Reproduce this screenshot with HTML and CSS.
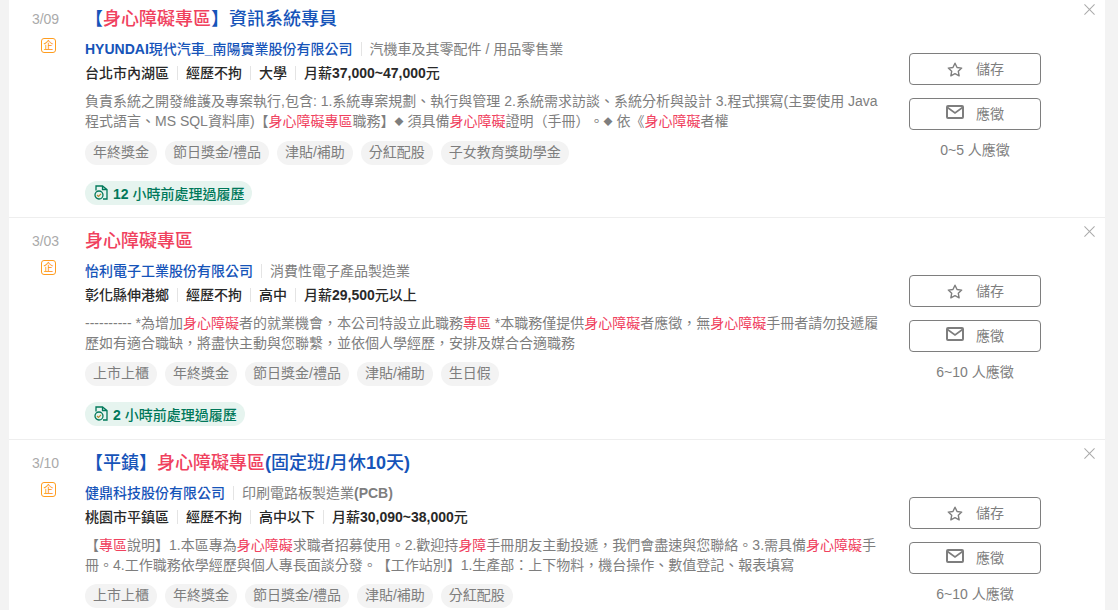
FILE: index.html
```html
<!DOCTYPE html>
<html lang="zh-Hant">
<head>
  <meta charset="UTF-8">
  <meta name="viewport" content="width=device-width, initial-scale=1">
  <title>身心障礙專區</title>
  <link rel="stylesheet" href="styles.css">
</head>
<body>
  <svg class="defs" aria-hidden="true">
    <symbol id="i-close" viewBox="0 0 12 12"><path d="M.5.5l11 11M11.500.5l-11 11" fill="none" stroke="currentColor" stroke-width="1.100"/></symbol>
    <symbol id="i-star" viewBox="0 0 16 15"><path d="M8 1.200l2.050 4.250 4.650.62-3.400 3.220.85 4.600L8 11.650l-4.150 2.240.85-4.600L1.300 6.070l4.650-.62z" fill="none" stroke="currentColor" stroke-width="1.400" stroke-linejoin="round"/></symbol>
    <symbol id="i-mail" viewBox="0 0 18 14"><rect x="1" y="1" width="16" height="12" rx="1" fill="none" stroke="currentColor" stroke-width="2"/><path d="M1.500 2.500L9 8l7.500-5.500" fill="none" stroke="currentColor" stroke-width="1.600"/></symbol>
    <symbol id="i-doc" viewBox="0 0 14 15"><path d="M2 5.500V1h6.500L13 4.500V14H9M8.500 1v3.500H13" fill="none" stroke="currentColor" stroke-width="1.300"/><circle cx="5" cy="10" r="4" fill="none" stroke="currentColor" stroke-width="1.300"/><path d="M3 10l1.500 1.500L7 8.900" fill="none" stroke="#b08a2e" stroke-width="1.200"/></symbol>
  </svg>

  <div class="job-list">

    <article class="job">
      <button class="close"><svg><use href="#i-close"/></svg></button>
      <div class="side">
        <div class="date">3/09</div>
        <span class="corp">企</span>
      </div>
      <div class="main">
        <h2 class="title">【<em>身心障礙專區</em>】資訊系統專員</h2>
        <div class="row company"><a><b>HYUNDAI</b>現代汽車<b>_</b>南陽實業股份有限公司</a><span class="industry">汽機車及其零配件 / 用品零售業</span></div>
        <ul class="row meta">
          <li>台北市內湖區</li><li>經歷不拘</li><li>大學</li><li>月薪<b>37,000~47,000</b>元</li>
        </ul>
        <p class="desc">負責系統之開發維護及專案執行,包含: 1.系統專案規劃、執行與管理 2.系統需求訪談、系統分析與設計 3.程式撰寫(主要使用 Java 程式語言、MS SQL資料庫)【<em>身心障礙專區</em>職務】<span class="dia">◆</span> 須具備<em>身心障礙</em>證明（手冊）。<span class="dia">◆</span> 依《<em>身心障礙</em>者權</p>
        <div class="tags">
          <span>年終獎金</span><span>節日獎金/禮品</span><span>津貼/補助</span><span>分紅配股</span><span>子女教育獎助學金</span>
        </div>
        <div class="active"><svg><use href="#i-doc"/></svg><span><b>12</b> 小時前處理過履歷</span></div>
      </div>
      <div class="actions">
        <button class="btn"><svg class="star"><use href="#i-star"/></svg><span>儲存</span></button>
        <button class="btn"><svg class="mail"><use href="#i-mail"/></svg><span>應徵</span></button>
        <div class="count">0~5 人應徵</div>
      </div>
    </article>

    <article class="job">
      <button class="close"><svg><use href="#i-close"/></svg></button>
      <div class="side">
        <div class="date">3/03</div>
        <span class="corp">企</span>
      </div>
      <div class="main">
        <h2 class="title"><em>身心障礙專區</em></h2>
        <div class="row company"><a>怡利電子工業股份有限公司</a><span class="industry">消費性電子產品製造業</span></div>
        <ul class="row meta">
          <li>彰化縣伸港鄉</li><li>經歷不拘</li><li>高中</li><li>月薪<b>29,500</b>元以上</li>
        </ul>
        <p class="desc">---------- *為增加<em>身心障礙</em>者的就業機會，本公司特設立此職務<em>專區</em> *本職務僅提供<em>身心障礙</em>者應徵，無<em>身心障礙</em>手冊者請勿投遞履歷如有適合職缺，將盡快主動與您聯繫，並依個人學經歷，安排及媒合合適職務</p>
        <div class="tags">
          <span>上市上櫃</span><span>年終獎金</span><span>節日獎金/禮品</span><span>津貼/補助</span><span>生日假</span>
        </div>
        <div class="active"><svg><use href="#i-doc"/></svg><span><b>2</b> 小時前處理過履歷</span></div>
      </div>
      <div class="actions">
        <button class="btn"><svg class="star"><use href="#i-star"/></svg><span>儲存</span></button>
        <button class="btn"><svg class="mail"><use href="#i-mail"/></svg><span>應徵</span></button>
        <div class="count">6~10 人應徵</div>
      </div>
    </article>

    <article class="job">
      <button class="close"><svg><use href="#i-close"/></svg></button>
      <div class="side">
        <div class="date">3/10</div>
        <span class="corp">企</span>
      </div>
      <div class="main">
        <h2 class="title">【平鎮】<em>身心障礙專區</em><b>(</b>固定班<b>/</b>月休<b>10</b>天<b>)</b></h2>
        <div class="row company"><a>健鼎科技股份有限公司</a><span class="industry">印刷電路板製造業<b>(PCB)</b></span></div>
        <ul class="row meta">
          <li>桃園市平鎮區</li><li>經歷不拘</li><li>高中以下</li><li>月薪<b>30,090~38,000</b>元</li>
        </ul>
        <p class="desc">【<em>專區</em>說明】1.本區專為<em>身心障礙</em>求職者招募使用。2.歡迎持<em>身障</em>手冊朋友主動投遞，我們會盡速與您聯絡。3.需具備<em>身心障礙</em>手冊。4.工作職務依學經歷與個人專長面談分發。【工作站別】1.生產部：上下物料，機台操作、數值登記、報表填寫</p>
        <div class="tags">
          <span>上市上櫃</span><span>年終獎金</span><span>節日獎金/禮品</span><span>津貼/補助</span><span>分紅配股</span>
        </div>
      </div>
      <div class="actions">
        <button class="btn"><svg class="star"><use href="#i-star"/></svg><span>儲存</span></button>
        <button class="btn"><svg class="mail"><use href="#i-mail"/></svg><span>應徵</span></button>
        <div class="count">6~10 人應徵</div>
      </div>
    </article>

  </div>
</body>
</html>
```

FILE: styles.css
```css
html, body {
  height: 100%;
  overflow: hidden;
}
body {
  margin: 0;
  background: #f3f3f3;
  font-family: "Liberation Sans", "Noto Sans CJK TC", sans-serif;
  font-size: 14px;
  color: #292929;
  text-spacing-trim: space-all;
}
b {
  font-weight: 700;
}
.defs {
  display: none;
}
.job-list {
  margin: -4px 13px 0 9px;
  background: white;
}
.job {
  position: relative;
  display: flex;
  height: 221px;
  border-bottom: 1px solid #eee;
}
.side {
  width: 76px;
  flex: none;
  padding-top: 13px;
  text-align: center;
}
.date {
  line-height: 20px;
  color: #aaa;
  padding-right: 3px;
}
.corp {
  display: block;
  width: 13px;
  height: 13px;
  margin: 9px 0 0 32px;
  border: 1.5px solid #ff9d1f;
  border-radius: 3px;
  color: #ff9100;
  font-size: 10px;
  line-height: 14px;
}
.main {
  width: 796px;
  flex: none;
  padding-top: 9px;
}
.title {
  margin: 0 0 4px;
  font-size: 18px;
  font-weight: 500;
  line-height: 28px;
  color: #1654b9;
}
em {
  font-style: normal;
  color: #f0415e;
}
.dia {
  font-size: 9px;
  vertical-align: 1px;
}
.row {
  display: flex;
  margin: 0;
  padding: 0;
  line-height: 24px;
  list-style: none;
}
.company a {
  color: #1654b9;
  font-weight: 500;
}
.industry {
  margin-left: 8px;
  padding-left: 9px;
  color: #7e7e7e;
  background: linear-gradient(#e4e4e4, #e4e4e4) left center / 1px 14px no-repeat;
}
.meta li {
  font-weight: 500;
  padding: 0 8px 0 9px;
  background: linear-gradient(#e4e4e4, #e4e4e4) left center / 1px 14px no-repeat;
}
.meta li:first-child {
  padding-left: 0;
  background: none;
}
.desc {
  margin: 6px 0 9px;
  line-height: 20px;
  color: #7e7e7e;
}
.tags {
  display: flex;
  gap: 8px;
}
.tags span {
  height: 24px;
  padding: 0 8px;
  border-radius: 12px;
  background: #f3f3f3;
  color: #7e7e7e;
  line-height: 22px;
}
.active {
  display: inline-flex;
  align-items: center;
  gap: 4px;
  height: 24px;
  margin-top: 16px;
  padding: 0 8px;
  border-radius: 12px;
  background: #e6f4ef;
  color: #00785a;
  font-weight: 500;
}
.active svg {
  width: 14px;
  height: 15px;
  margin: -2px 1px 0 1px;
}
.actions {
  width: 132px;
  margin-left: 28px;
  padding-top: 57px;
  flex: none;
}
.btn {
  display: flex;
  align-items: center;
  justify-content: center;
  gap: 12px;
  width: 132px;
  height: 32px;
  margin-bottom: 13px;
  padding: 0;
  border: 1px solid #7e7e7e;
  border-radius: 4px;
  background: white;
  color: #7e7e7e;
  font-family: inherit;
  font-size: 14px;
}
.btn span {
  margin-bottom: 2px;
}
.star {
  width: 16px;
  height: 15px;
  margin: 0 1px;
}
.mail {
  width: 18px;
  height: 14px;
  margin-bottom: 4px;
}
.count {
  margin-top: -3px;
  line-height: 20px;
  text-align: center;
  color: #7e7e7e;
}
.close {
  position: absolute;
  top: 8px;
  right: 10px;
  width: 11px;
  height: 11px;
  padding: 0;
  border: none;
  background: none;
  color: #aaa;
}
.close svg {
  display: block;
  width: 11px;
  height: 11px;
}
```
